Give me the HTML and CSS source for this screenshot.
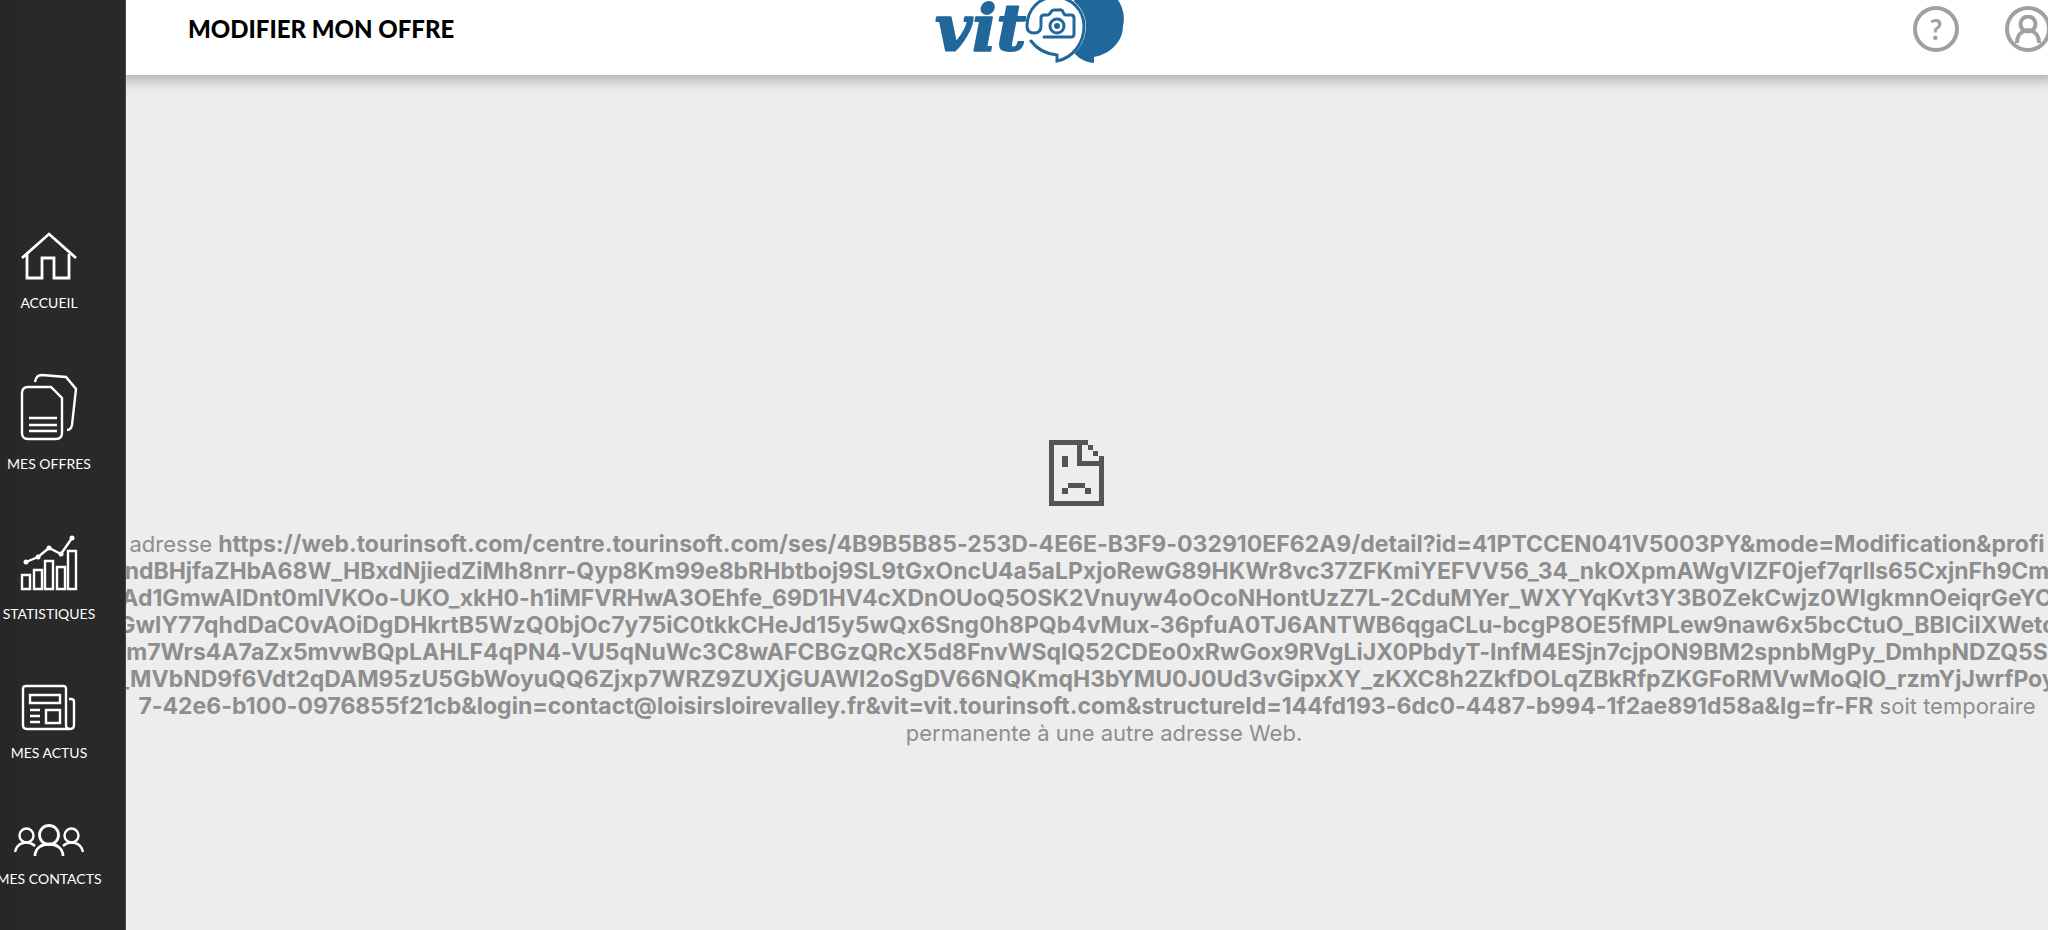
FILE: index.html
```html
<!DOCTYPE html>
<html lang="fr">
<head>
<meta charset="utf-8">
<title>Modifier mon offre</title>
<link rel="stylesheet" href="styles.css">
</head>
<body>
<div class="app">
  <aside class="sidebar">
    <nav class="nav">
      <a class="nav-item" href="#">
        <svg width="56" height="48" viewBox="0 0 56 48"><path d="M1 26 28 2l27 24M6 22v24h15V26h12v20h15V22" stroke-width="2.8"/></svg>
        <span>ACCUEIL</span>
      </a>
      <a class="nav-item" href="#">
        <svg width="56" height="67" viewBox="0 0 56 67"><path d="M7 13h23l11 11v35q0 6-6 6H7q-6 0-6-6V19q0-6 6-6ZM8 44h28M8 51h28M8 57h28M14 8q1-7 7-7l24 2 10 12-4 36q-1 5-5 5" stroke-width="2.4"/></svg>
        <span>MES OFFRES</span>
      </a>
      <a class="nav-item" href="#">
        <svg width="56" height="56" viewBox="0 0 56 56"><path d="M1 40h8v14H1ZM13 35h8v19h-8ZM24 26h8v28h-8ZM36 32h8v22h-8ZM47 16h8v38h-8ZM5 27l12-5 11-9 12 6L51 3" stroke-width="2.4"/><g class="solid"><circle cx="5" cy="27" r="2.5"/><circle cx="17" cy="22" r="2.5"/><circle cx="28" cy="13" r="2.5"/><circle cx="40" cy="19" r="2.5"/><circle cx="51" cy="3" r="2.5"/></g></svg>
        <span>STATISTIQUES</span>
      </a>
      <a class="nav-item" href="#">
        <svg width="56" height="45" viewBox="0 0 56 45"><path d="M45 40V4q0-3-3-3H5Q2 1 2 4v36q0 4 4 4h43q4 0 4-4V17q0-3-3-3h-2M45 40q0 4 4 4M9 10h30v8H9ZM25 25h14v13H25ZM9 25h10M9 31h10M9 37h10" stroke-width="2.4"/></svg>
        <span>MES ACTUS</span>
      </a>
      <a class="nav-item" href="#">
        <svg width="70" height="32" viewBox="0 0 70 32"><g stroke-width="2.8"><circle cx="35" cy="11" r="9.5"/><path d="M21 32c0-16 28-16 28 0"/></g><g stroke-width="2.4"><circle cx="12.500" cy="11.500" r="7"/><circle cx="57.500" cy="11.500" r="7"/><path d="M1 28c2-10 13-12 20-6M69 28c-2-10-13-12-20-6"/></g></svg>
        <span>MES CONTACTS</span>
      </a>
    </nav>
  </aside>
  <div class="page">
    <header class="topbar">
      <h1 class="title">MODIFIER MON OFFRE</h1>
      <svg class="logo" width="196" height="68" viewBox="0 0 196 68" role="img" aria-label="vit">
        <text class="logo-text" x="3" y="50">vit</text>
        <path class="logo-fill" d="M142-8a32 32 0 0 1 49 34c0 15-12 28-29 31v6c-9-1-14-4-19-9Z"/>
        <path class="logo-cut" d="M124-4a30 30 0 0 1 29 30c0 17-12 33-28 36v-6C108 54 95 42 95 26A30 30 0 0 1 124-4Z"/>
        <path class="logo-line" d="M112 37h27q3 0 3-3V18q0-3-3-3h-5q-2 0-3-3t-4-2h-5q-2 0-3 2t-3 3h-4q-3 0-3 3v8q0 7-7 7t-7-7C95 10 107-3 123-3s29 13 29 29c0 17-11 32-27 35v-6c-11-1-20-6-26-14"/>
        <circle class="logo-line" cx="125" cy="26" r="7"/>
        <circle class="logo-fill" cx="125" cy="26" r="3"/>
      </svg>
      <div class="actions">
        <button class="round" type="button" aria-label="Aide"><span>?</span></button>
        <button class="round" type="button" aria-label="Mon compte"><svg width="26" height="28" viewBox="0 0 26 28"><circle cx="13" cy="9" r="7.500"/><path d="M2 28c0-17 22-17 22 0"/></svg></button>
      </div>
    </header>
    <main class="error">
      <svg class="sad" width="55" height="66" viewBox="0 0 55 66"><path fill-rule="evenodd" d="M0 0h39v5h-6v16h17v-5h5v50H0ZM5 5v56h45V26H28V5ZM39 5h5v5h-5ZM44 11h5v5h-5ZM13 16h6v11h-6ZM19 43h17v5H19ZM13 48h6v6h-6ZM36 48h6v6h-6Z"/></svg>
      <p class="message">
        <span class="line">adresse <b>https://web.tourinsoft.com/centre.tourinsoft.com/ses/4B9B5B85-253D-4E6E-B3F9-032910EF62A9/detail?id=41PTCCEN041V5003PY&amp;mode=Modification&amp;profi</b></span>
        <b class="line">ndBHjfaZHbA68W_HBxdNjiedZiMh8nrr-Qyp8Km99e8bRHbtboj9SL9tGxOncU4a5aLPxjoRewG89HKWr8vc37ZFKmiYEFVV56_34_nkOXpmAWgVIZF0jef7qrlls65CxjnFh9Cm</b>
        <b class="line">Ad1GmwAlDnt0mlVKOo-UKO_xkH0-h1iMFVRHwA3OEhfe_69D1HV4cXDnOUoQ5OSK2Vnuyw4oOcoNHontUzZ7L-2CduMYer_WXYYqKvt3Y3B0ZekCwjz0WIgkmnOeiqrGeYO</b>
        <b class="line">GwlY77qhdDaC0vAOiDgDHkrtB5WzQ0bjOc7y75iC0tkkCHeJd15y5wQx6Sng0h8PQb4vMux-36pfuA0TJ6ANTWB6qgaCLu-bcgP8OE5fMPLew9naw6x5bcCtuO_BBICilXWetc</b>
        <b class="line">m7Wrs4A7aZx5mvwBQpLAHLF4qPN4-VU5qNuWc3C8wAFCBGzQRcX5d8FnvWSqlQ52CDEo0xRwGox9RVgLiJX0PbdyT-InfM4ESjn7cjpON9BM2spnbMgPy_DmhpNDZQ5S</b>
        <b class="line">_MVbND9f6Vdt2qDAM95zU5GbWoyuQQ6Zjxp7WRZ9ZUXjGUAWl2oSgDV66NQKmqH3bYMU0J0Ud3vGipxXY_zKXC8h2ZkfDOLqZBkRfpZKGFoRMVwMoQlO_rzmYjJwrfPoy</b>
        <span class="line"><b>7-42e6-b100-0976855f21cb&amp;login=contact@loisirsloirevalley.fr&amp;vit=vit.tourinsoft.com&amp;structureId=144fd193-6dc0-4487-b994-1f2ae891d58a&amp;lg=fr-FR</b> soit temporaire</span>
        <span class="line last">permanente à une autre adresse Web.</span>
      </p>
    </main>
  </div>
</div>
</body>
</html>
```
FILE: styles.css
```css
* { box-sizing: border-box; }
body { margin: 0; background: #ededed; overflow: hidden; }
.app { display: flex; min-height: 100vh; }
.sidebar {
  flex: none;
  width: 126px;
  padding-top: 232px;
  overflow: hidden;
  border-right: 1px solid #484848;
  background: linear-gradient(90deg, #272727 17px, #292929 17px);
}
.nav { display: flex; flex-direction: column; gap: 62px; width: 98px; }
.nav-item {
  display: flex;
  flex-direction: column;
  align-items: center;
  gap: 14px;
  color: #fff;
  font: 14px/18px Lato, sans-serif;
  text-decoration: none;
  white-space: nowrap;
}
.nav-item svg {
  flex: none;
  fill: none;
  stroke: #fff;
  overflow: visible;
}
.nav-item .solid { fill: #fff; stroke: none; }
.page { flex: 1; min-width: 0; display: flex; flex-direction: column; overflow: hidden; }
.topbar {
  display: flex;
  height: 75px;
  padding-left: 62px;
  background: #fff;
  box-shadow: 0 -4px 14px 8px rgba(0, 0, 0, .3);
}
.title {
  flex: 0 0 40%;
  margin: 0;
  padding-top: 14px;
  color: #000;
  font: 900 24px/30px Lato, sans-serif;
}
.logo { flex: none; }
.logo-text {
  fill: #20689c;
  stroke: #20689c;
  stroke-width: 2;
  stroke-linejoin: round;
  font: italic bold 64px "DejaVu Serif", serif;
}
.logo-fill { fill: #20689c; }
.logo-cut { fill: #fff; stroke: #fff; stroke-width: 2; }
.logo-line { fill: none; stroke: #20689c; stroke-width: 3; stroke-linecap: round; }
.actions { display: flex; gap: 46px; margin: 6px -3px 0 auto; }
.round {
  display: flex;
  align-items: center;
  justify-content: center;
  width: 46px;
  height: 46px;
  padding: 0;
  border: 4px solid #a0a0a0;
  border-radius: 50%;
  background: none;
  color: #a0a0a0;
  font: bold 28px/28px Lato, sans-serif;
}
.round svg { fill: none; stroke: #a0a0a0; stroke-width: 4; }
.error {
  display: flex;
  flex-direction: column;
  align-items: center;
  padding-top: 365px;
}
.sad { margin-right: 22px; fill: #545454; }
.message {
  display: flex;
  flex-direction: column;
  align-items: center;
  margin: 25px 0 0;
  color: #8e8e8e;
  font: 22px/27px Inter, sans-serif;
  font-feature-settings: "calt" 0;
}
.message b { font-size: 23px; }
.line { height: 27px; white-space: nowrap; }
.last { padding-left: 34px; }
```
